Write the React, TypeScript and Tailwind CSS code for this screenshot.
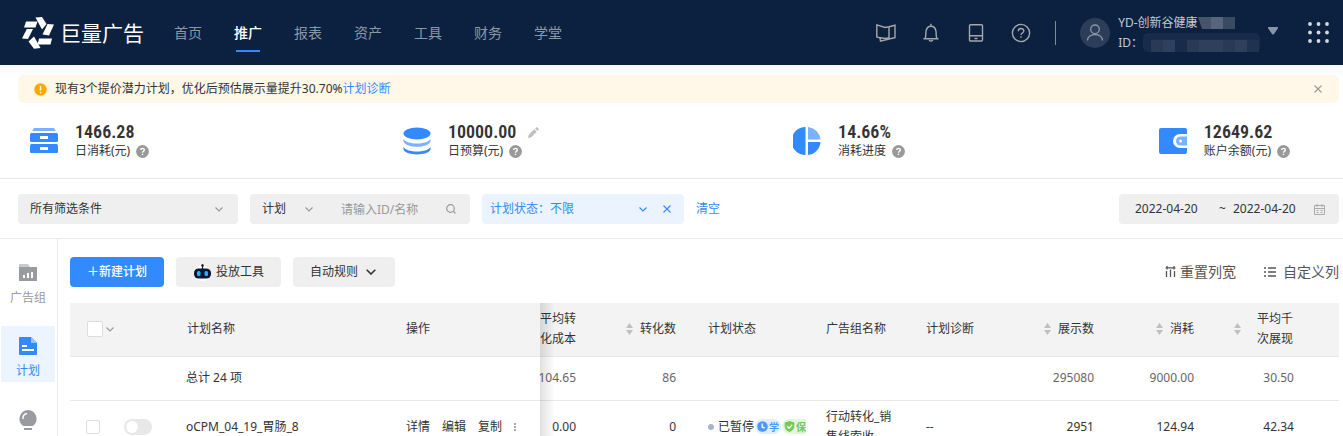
import React from 'react';

const NAV = ['首页', '推广', '报表', '资产', '工具', '财务', '学堂'];

const Logo = () => (
    <svg width="32" height="32" viewBox="0 0 32 32" fill="#fff" aria-hidden="true">
        <path d="M4 4.5H15.5L13.5 10.5H2Z" />
        <path d="M13.5 .5L20 0L24.5 7L20 12.5Z" />
        <path d="M25.5 7L32 7.5L27 18.5L20.5 17.5Z" />
        <path d="M17 21.5H30L28.5 27.5H15.5Z" />
        <path d="M12 19.5L18.5 31L12 31.8L6.5 24.5Z" />
        <path d="M4.8 12H11L6 22L0 21.5Z" />
    </svg>
);

const Chevron = ({ className = '' }: { className?: string }) => (
    <svg className={`pointer-events-none shrink-0 ${className}`} width="8" height="5" viewBox="0 0 8 5" fill="none" stroke="currentColor" strokeWidth="1.2" aria-hidden="true">
        <path d="M.5 .5L4 4L7.5 .5" />
    </svg>
);

const Close = () => (
    <svg width="8" height="8" viewBox="0 0 8 8" stroke="currentColor" strokeWidth="1.1" aria-hidden="true">
        <path d="M.5 .5L7.5 7.5M7.5 .5L.5 7.5" />
    </svg>
);

const Help = () => (
    <svg width="13" height="13" viewBox="0 0 13 13" aria-hidden="true">
        <circle cx="6.5" cy="6.5" r="6.4" fill="#999" />
        <path d="M4.7 5.1C4.7 2.7 8.3 2.8 8.3 5C8.3 6.3 6.5 6.3 6.5 7.8M6.5 8.8V10.1" fill="none" stroke="#fff" strokeWidth="1.4" />
    </svg>
);

const Sort = () => (
    <svg width="7" height="12" viewBox="0 0 7 12" fill="#bfbfbf" className="shrink-0" aria-hidden="true">
        <path d="M3.5 0L7 5H0ZM3.5 12L0 7H7Z" />
    </svg>
);

const SpendIcon = () => (
    <svg width="28" height="26" viewBox="0 0 28 26" aria-hidden="true">
        <path d="M5 0H23Q25 0 25.5 3H2.5Q3 0 5 0Z" fill="#7ab2ff" />
        <rect y="5" width="28" height="9" rx="1.5" fill="#338aff" />
        <rect y="16" width="28" height="9" rx="1.5" fill="#338aff" />
        <path d="M10 8H18V11H10ZM10 19H18V22H10Z" fill="#fff" />
    </svg>
);

const BudgetIcon = () => (
    <svg width="28" height="28" viewBox="0 0 28 28" aria-hidden="true">
        <ellipse cx="14" cy="6.5" rx="13.5" ry="6" fill="#338aff" />
        <path d="M.5 12C4 18 24 18 27.5 12V14.5C25 21.5 3 21.5 .5 14.5Z" fill="#7ab2ff" />
        <path d="M.5 20C4 26 24 26 27.5 20V22.5C25 29 3 29 .5 22.5Z" fill="#338aff" />
    </svg>
);

const ProgressIcon = () => (
    <svg width="28" height="28" viewBox="0 0 28 28" aria-hidden="true">
        <path d="M12.5 0V28A14 14 0 0 1 12.5 0Z" fill="#338aff" />
        <path d="M15 0A14 14 0 0 1 27.5 12.5H15Z" fill="#7ab2ff" />
        <path d="M15 15H27.5A14 14 0 0 1 15 28Z" fill="#338aff" />
    </svg>
);

const BalanceIcon = () => (
    <svg width="28" height="26" viewBox="0 0 28 26" aria-hidden="true">
        <path d="M2 0H26Q28 0 28 2V6H21A7 7 0 0 0 21 20H28V24Q28 26 26 26H2Q0 26 0 24V2Q0 0 2 0Z" fill="#338aff" />
        <path d="M21.5 8.5H28V17.5H21.5A4.5 4.5 0 0 1 21.5 8.5Z" fill="#7ab2ff" />
        <circle cx="21.5" cy="13" r="1.5" fill="#fff" />
    </svg>
);

const Pencil = () => (
    <svg width="11" height="11" viewBox="0 0 11 11" fill="#bfbfbf" aria-hidden="true">
        <path d="M0 11L.8 7.8L6.3 2.3L8.7 4.7L3.2 10.2ZM7.1 1.5L8.3 .3Q8.8 0 9.3 .4L10.6 1.7Q11 2.2 10.7 2.7L9.5 3.9Z" />
    </svg>
);

const STATS = [
    { value: '1466.28', label: '日消耗(元)', icon: <SpendIcon /> },
    { value: '10000.00', label: '日预算(元)', icon: <BudgetIcon />, editable: true },
    { value: '14.66%', label: '消耗进度', icon: <ProgressIcon /> },
    { value: '12649.62', label: '账户余额(元)', icon: <BalanceIcon /> },
];

const Header = () => (
    <header className="flex h-[65px] shrink-0 items-center bg-[#0c213f] pr-3.5 pl-[22px]">
        <Logo />
        <span className="ml-1.5 text-[21px] leading-7 text-white">巨量广告</span>
        <nav className="ml-[30px] flex h-full gap-8">
            {NAV.map(item => (
                <a key={item} href="#" className={`relative flex items-center text-sm ${item === '推广' ? 'font-medium text-white' : 'text-[#8c97a6]'}`}>
                    {item}
                    {item === '推广' && <span className="absolute bottom-[13px] left-0.5 h-0.5 w-6 bg-[#338aff]" />}
                </a>
            ))}
        </nav>
        <div className="ml-auto flex items-center gap-[25px] text-[#a5a7aa]">
            <button aria-label="手册">
                <svg width="20" height="20" viewBox="0 0 20 20" fill="none" stroke="currentColor" strokeWidth="1.4">
                    <path d="M.8 1.8L9 4.5L13 3.8L19 2.2V14.8L13 16L4.5 18.2L4 14.8L.8 14Z" />
                    <path d="M13 4V16M4 14.8L9.5 15.5L13 14.8" />
                </svg>
            </button>
            <button aria-label="通知">
                <svg width="20" height="20" viewBox="0 0 20 20" fill="none" stroke="currentColor" strokeWidth="1.4">
                    <path d="M10 .8V3M2.5 15.8H17.5M4 15.5C5.3 13.5 4.6 11 5 8.5C5.4 5 7.5 3.2 10 3.2C12.5 3.2 14.6 5 15 8.5C15.4 11 14.7 13.5 16 15.5M8 17.2Q10 18.8 12 17.2" />
                </svg>
            </button>
            <button aria-label="移动端">
                <svg width="20" height="20" viewBox="0 0 20 20" fill="none" stroke="currentColor" strokeWidth="1.4">
                    <rect x="3.5" y="1.7" width="13" height="16.3" rx="1" />
                    <path d="M3.5 12.8H16.5M8.5 15.5H11.5" />
                </svg>
            </button>
            <button aria-label="帮助">
                <svg width="20" height="20" viewBox="0 0 20 20" fill="none" stroke="currentColor" strokeWidth="1.4">
                    <circle cx="10" cy="10" r="8.6" />
                    <path d="M7.3 8.2C7.3 4.6 12.8 4.7 12.8 8C12.8 10 10 10 10 12M10 13.2V14.7" />
                </svg>
            </button>
        </div>
        <div className="ml-6 h-6 w-px bg-[#7f8a9a]" />
        <div className="ml-6 flex items-center">
            <svg width="30" height="30" viewBox="0 0 30 30" aria-hidden="true">
                <circle cx="15" cy="15" r="15" fill="#2b3d59" />
                <circle cx="15" cy="11.3" r="4.3" fill="none" stroke="#8c97a6" strokeWidth="1.3" />
                <path d="M7.5 22.5C7.5 14.5 22.5 14.5 22.5 22.5" fill="none" stroke="#8c97a6" strokeWidth="1.3" />
            </svg>
            <div className="ml-2 text-xs leading-5 text-[#c4cad2]">
                <div className="flex items-center">
                    YD-创新谷健康
                    <svg width="37" height="12" viewBox="-3 0 37 12" aria-hidden="true">
                        <path d="M-3 0H10V12H1Z" fill="#455468" />
                        <rect x="10" width="12" height="12" fill="#56657b" />
                        <rect x="22" width="12" height="12" fill="#3b4a63" />
                    </svg>
                </div>
                <div className="flex items-center">
                    ID：
                    <svg width="117" height="19" viewBox="5 0 117 19" aria-hidden="true">
                        <rect x="5" width="117" height="19" rx="5" fill="#182b4a" />
                        <path d="M13 7H25V19H13ZM49 7H61V19H49ZM85 7H97V19H85Z" fill="#283a56" />
                        <path d="M25 7H37V19H25ZM61 7H85V19H61ZM97 7H109V19H97Z" fill="#2f405c" />
                        <path d="M109 7H121V19H109Z" fill="#1f3250" />
                    </svg>
                </div>
            </div>
        </div>
        <button className="ml-2 pb-1" aria-label="切换账户">
            <svg width="10" height="8" viewBox="0 0 10 8" fill="#8994a4">
                <path d="M.5 0H9.5Q10.5 .5 9.8 1.6L5.8 7.2Q5 8 4.2 7.2L.2 1.6Q-.5 .5 .5 0Z" />
            </svg>
        </button>
        <button className="ml-[30px]" aria-label="更多应用">
            <svg width="21" height="21" viewBox="0 0 21 21" fill="#d5d9df">
                {[2, 10.5, 19].map(y => [2, 10.5, 19].map(x => <circle key={`${x}-${y}`} cx={x} cy={y} r="1.9" />))}
            </svg>
        </button>
    </header>
);

const Stats = () => (
    <section className="flex h-[76px] shrink-0 items-center justify-between border-b border-[#e8e8e8] pt-px pr-[53px] pl-[30px]">
        {STATS.map(s => (
            <div key={s.label} className="flex items-center">
                <div className="flex w-[45px] items-center">{s.icon}</div>
                <div>
                    <div className="flex items-center gap-3 font-['Roboto_Condensed','Roboto',sans-serif] text-[18px] leading-5 font-semibold text-[#333]">
                        {s.value}
                        {s.editable && <button aria-label="修改预算"><Pencil /></button>}
                    </div>
                    <div className="flex items-center gap-1.5 text-xs leading-[18px] text-[#333]">
                        {s.label}
                        <Help />
                    </div>
                </div>
            </div>
        ))}
    </section>
);

const Filters = () => (
    <section className="flex h-[60px] shrink-0 items-center gap-3 border-b border-[#e8e8e8] pt-px pr-1 pl-[18px] text-xs text-[#333]">
        <div className="flex h-[30px] w-[220px] items-center rounded bg-[#efefef] pr-[15px]">
            <select aria-label="筛选条件" className="h-full flex-1 appearance-none pl-3 outline-none">
                <option>所有筛选条件</option>
            </select>
            <Chevron className="text-[#999]" />
        </div>
        <div className="flex h-[30px] w-[220px] items-center rounded bg-[#efefef] pr-3.5">
            <select aria-label="搜索类型" className="h-full w-[55px] appearance-none pl-3 outline-none">
                <option>计划</option>
            </select>
            <Chevron className="text-[#999]" />
            <input aria-label="搜索" placeholder="请输入ID/名称" className="ml-7 h-full w-0 flex-1 outline-none placeholder:text-[#999]" />
            <button aria-label="查询">
                <svg width="10" height="10" viewBox="0 0 10 10" fill="none" stroke="#999" strokeWidth="1.2">
                    <circle cx="4.5" cy="4.5" r="3.8" />
                    <path d="M7.2 7.2L9.5 9.5" />
                </svg>
            </button>
        </div>
        <div className="flex h-[30px] w-[202px] items-center rounded bg-[#ebf3ff] pr-[13px] text-[#338aff]">
            <label htmlFor="status" className="pl-2">计划状态：</label>
            <select id="status" className="h-full flex-1 appearance-none outline-none">
                <option>不限</option>
            </select>
            <Chevron />
            <button className="ml-4" aria-label="移除条件"><Close /></button>
        </div>
        <button className="text-[#338aff]">清空</button>
        <div className="ml-auto flex h-[30px] w-[220px] items-center rounded bg-[#efefef] pr-3.5 pl-4">
            <input aria-label="开始日期" defaultValue="2022-04-20" className="w-[84px] outline-none" />
            <span className="w-3.5">~</span>
            <input aria-label="结束日期" defaultValue="2022-04-20" className="w-0 flex-1 outline-none" />
            <svg width="11" height="11" viewBox="0 0 11 11" fill="none" stroke="#aaa" aria-hidden="true">
                <path d="M.5 1.5H10.5V10.5H.5ZM.5 4.5H10.5M3 0V3M8 0V3M2.5 6.5H4.5M6.5 6.5H8.5M2.5 8.5H4.5M6.5 8.5H8.5" />
            </svg>
        </div>
    </section>
);

const Sidebar = () => (
    <aside className="w-[58px] shrink-0 border-r border-[#e8e8e8] pr-0.5 pl-px text-xs">
        <a href="#" className="mt-4 flex h-14 flex-col items-center pt-[9px] text-[#999ba1]">
            <svg width="18" height="17" viewBox="0 0 18 17" aria-hidden="true">
                <path d="M0 0H9L11 3H0Z" fill="#c8cacd" />
                <path d="M0 3H18V17H0Z" fill="#999ba1" />
                <path d="M4 11H6V14H4ZM8 9H10V14H8ZM12 8H14V14H12Z" fill="#fff" />
            </svg>
            <span className="mt-2 leading-[18px]">广告组</span>
        </a>
        <a href="#" className="mt-[15px] flex h-14 flex-col items-center bg-[#ebf4ff] pt-[11px] text-[#338aff]">
            <svg width="18" height="18" viewBox="0 0 18 18" aria-hidden="true">
                <path d="M1 0H12L18 6V17Q18 18 17 18H1Q0 18 0 17V1Q0 0 1 0Z" fill="#338aff" />
                <path d="M12 0L18 6H12Z" fill="#99c5ff" />
                <path d="M3 8H8V10H3ZM3 12H15V14H3Z" fill="#fff" />
            </svg>
            <span className="mt-[7px] leading-[18px]">计划</span>
        </a>
        <a href="#" aria-label="创意" className="flex flex-col items-center pt-7">
            <svg width="18" height="20" viewBox="0 0 18 20" aria-hidden="true">
                <path d="M9 0A8.7 8.7 0 0 1 13.5 16H4.5A8.7 8.7 0 0 1 9 0Z" fill="#999ba1" />
                <path d="M4 9Q3.5 4.5 8 3.5" fill="none" stroke="#fff" strokeWidth="1.4" />
                <path d="M5 18H13V20H5Z" fill="#999ba1" />
            </svg>
        </a>
    </aside>
);

const Toolbar = () => (
    <div className="flex items-center gap-3 text-xs text-[#333]">
        <button className="h-[30px] w-[94px] rounded bg-[#338aff] font-medium text-white">＋新建计划</button>
        <button className="flex h-[30px] w-[105px] items-center rounded bg-[#efefef] pl-[17px]">
            <svg width="19" height="18" viewBox="0 0 19 18" aria-hidden="true">
                <circle cx="9.5" cy="10" r="8" fill="#fff" />
                <path d="M9.5 1.5V6" stroke="#0a1430" strokeWidth="1.2" />
                <circle cx="9.5" cy="2.5" r="1.2" fill="#0a1430" />
                <rect x="1" y="5.5" width="17" height="10" rx="4.5" fill="#0a1430" />
                <rect x="4" y="8" width="3.5" height="5" rx="1.5" fill="#1fb6ff" />
                <rect x="11.5" y="8" width="3.5" height="5" rx="1.5" fill="#1fb6ff" />
            </svg>
            <span className="ml-1">投放工具</span>
        </button>
        <button className="flex h-[30px] w-[102px] items-center rounded bg-[#efefef] pl-[17px]">
            自动规则
            <svg className="ml-2" width="10" height="6" viewBox="0 0 10 6" fill="none" stroke="currentColor" strokeWidth="1.6" aria-hidden="true">
                <path d="M.7 .7L5 5L9.3 .7" />
            </svg>
        </button>
        <div className="ml-auto flex items-center gap-7 text-sm text-[#555]">
            <button className="flex items-center gap-1">
                <svg width="11" height="12" viewBox="0 0 11 12" fill="none" stroke="currentColor" strokeWidth="1.3" aria-hidden="true">
                    <path d="M.5 1.8H10.5M2 0V3.6M9 0V3.6M1.5 5V11M5.5 3.5V11M9.5 5V11" />
                </svg>
                重置列宽
            </button>
            <button className="flex items-center gap-[7px]">
                <svg width="12" height="10" viewBox="0 0 12 10" fill="none" stroke="currentColor" strokeWidth="1.4" aria-hidden="true">
                    <path d="M0 1H2M4 1H12M0 5H2M4 5H12M0 9H2M4 9H12" />
                </svg>
                自定义列
            </button>
        </div>
    </div>
);

const NumHead = ({ children }: { children: React.ReactNode }) => (
    <th className="pr-3 font-normal">
        <div className="flex items-center justify-end gap-[7px]">
            <Sort />
            {children}
        </div>
    </th>
);

const PlanTable = () => (
    <div className="relative mt-4">
        <table className="w-full table-fixed border-collapse text-left text-xs leading-5 text-[#333]">
            <colgroup>
                <col className="w-[106px]" />
                <col />
                <col className="w-[144px]" />
                <col className="w-12" />
                <col className="w-[100px]" />
                <col className="w-[118px]" />
                <col className="w-[100px]" />
                <col className="w-[100px]" />
                <col className="w-[100px]" />
                <col className="w-[100px]" />
                <col className="w-[100px]" />
                <col className="w-[33px]" />
            </colgroup>
            <thead>
                <tr className="h-[53px] border-b border-[#e8e8e8] bg-[#f3f3f3]">
                    <th className="pl-[17px]">
                        <div className="flex items-center gap-[3px]">
                            <input type="checkbox" aria-label="全选" className="size-4 appearance-none rounded-xs border border-[#ddd] bg-white" />
                            <Chevron className="text-[#999]" />
                        </div>
                    </th>
                    <th className="pl-[11px] font-normal">计划名称</th>
                    <th className="pl-2.5 font-normal">操作</th>
                    <th className="pr-3 text-right font-normal">平均转化成本</th>
                    <NumHead>转化数</NumHead>
                    <th className="pl-5 font-normal">计划状态</th>
                    <th className="pl-5 font-normal">广告组名称</th>
                    <th className="pl-5 font-normal">计划诊断</th>
                    <NumHead>展示数</NumHead>
                    <NumHead>消耗</NumHead>
                    <th className="pr-3 font-normal">
                        <div className="flex items-center justify-end gap-4">
                            <Sort />
                            <span className="w-[37px]">平均千次展现</span>
                        </div>
                    </th>
                    <th />
                </tr>
            </thead>
            <tbody>
                <tr className="h-11 border-b border-[#e8e8e8] text-[#666]">
                    <td />
                    <td className="pl-2.5 text-[#333]">总计 24 项</td>
                    <td />
                    <td className="pr-3">
                        <div className="flex justify-end">104.65</div>
                    </td>
                    <td className="pr-3 text-right">86</td>
                    <td />
                    <td />
                    <td />
                    <td className="pr-3 text-right">295080</td>
                    <td className="pr-3 text-right">9000.00</td>
                    <td className="pr-3 text-right">30.50</td>
                    <td />
                </tr>
                <tr className="h-[53px] border-b border-[#e8e8e8]">
                    <td className="pl-4">
                        <div className="flex items-center gap-6">
                            <input type="checkbox" aria-label="选择 oCPM_04_19_胃肠_8" className="size-3.5 appearance-none rounded-xs border border-[#ddd] bg-white" />
                            <input type="checkbox" role="switch" aria-label="启用 oCPM_04_19_胃肠_8" className="h-4 w-7 appearance-none rounded-full bg-[#e8e8e8] before:m-0.5 before:block before:size-3 before:rounded-full before:bg-white" />
                        </div>
                    </td>
                    <td className="pl-2.5">oCPM_04_19_胃肠_8</td>
                    <td className="pl-2.5">
                        <div className="flex items-center gap-3">
                            <a href="#">详情</a>
                            <a href="#">编辑</a>
                            <a href="#">复制</a>
                            <button aria-label="更多">
                                <svg width="2" height="8" viewBox="0 0 2 8" fill="#aaa">
                                    <path d="M0 0H2V2H0ZM0 3H2V5H0ZM0 6H2V8H0Z" />
                                </svg>
                            </button>
                        </div>
                    </td>
                    <td className="pr-3 text-right">0.00</td>
                    <td className="pr-3 text-right">0</td>
                    <td className="pl-5">
                        <div className="flex items-center whitespace-nowrap">
                            <span className="mr-1 size-1.5 shrink-0 rounded-full bg-[#aab4c8]" />
                            已暂停
                            <span className="ml-px flex h-[15px] shrink-0 items-center gap-px rounded-full bg-[#e0edff] px-0.5 text-[10px] leading-none font-bold text-[#4d98ff]">
                                <svg width="11" height="11" viewBox="0 0 11 11" aria-hidden="true">
                                    <circle cx="5.5" cy="5.5" r="5.3" fill="#4d98ff" />
                                    <path d="M5.2 2.5V6L7.7 7.2" fill="none" stroke="#fff" strokeWidth="1.3" />
                                </svg>
                                学
                            </span>
                            <span className="ml-px flex h-[15px] shrink-0 items-center gap-px rounded-l-full bg-[#e2f6dc] pl-0.5 text-[10px] leading-none font-bold text-[#74c957]">
                                <svg width="11" height="11" viewBox="0 0 11 11" aria-hidden="true">
                                    <path d="M5.5 0L10.3 1.6V5.5Q10 9 5.5 11Q1 9 .7 5.5V1.6Z" fill="#74c957" />
                                    <path d="M3 5.2L5 7.2L8.2 3.8" fill="none" stroke="#fff" strokeWidth="1.3" />
                                </svg>
                                保
                            </span>
                        </div>
                    </td>
                    <td className="pr-3 pl-5">行动转化_销售线索收</td>
                    <td className="pl-5">--</td>
                    <td className="pr-3 text-right">2951</td>
                    <td className="pr-3 text-right">124.94</td>
                    <td className="pr-3 text-right">42.34</td>
                    <td />
                </tr>
            </tbody>
        </table>
        {/* shadow cast by the frozen columns */}
        <div className="pointer-events-none absolute inset-y-0 right-[784px] w-[15px] bg-linear-to-r from-black/12 to-transparent" />
    </div>
);

export default function App() {
    return (
        <div className="flex h-screen flex-col overflow-hidden bg-white font-['Noto_Sans','Noto_Sans_CJK_SC',sans-serif]">
            <Header />
            <div className="shrink-0 bg-linear-to-b from-[#f9f9fa] to-white to-[12px] pt-2.5 pr-1 pl-[18px]">
                <div className="flex h-7 items-center rounded-md bg-[#fff7e8] pr-[17px] pl-4 text-xs text-[#333]">
                    <svg width="13" height="13" viewBox="0 0 13 13" aria-hidden="true">
                        <circle cx="6.5" cy="6.5" r="6.2" fill="#ffa900" />
                        <path d="M6.5 3V7.5M6.5 8.8V10.2" stroke="#fff" strokeWidth="1.4" />
                    </svg>
                    <span className="ml-2">现有3个提价潜力计划，优化后预估展示量提升30.70%</span>
                    <a href="#" className="text-[#338aff]">计划诊断</a>
                    <button className="ml-auto text-[#999]" aria-label="关闭"><Close /></button>
                </div>
            </div>
            <Stats />
            <Filters />
            <div className="flex flex-1">
                <Sidebar />
                <main className="min-w-0 flex-1 pt-[18px] pr-1 pl-3">
                    <Toolbar />
                    <PlanTable />
                </main>
            </div>
        </div>
    );
}
